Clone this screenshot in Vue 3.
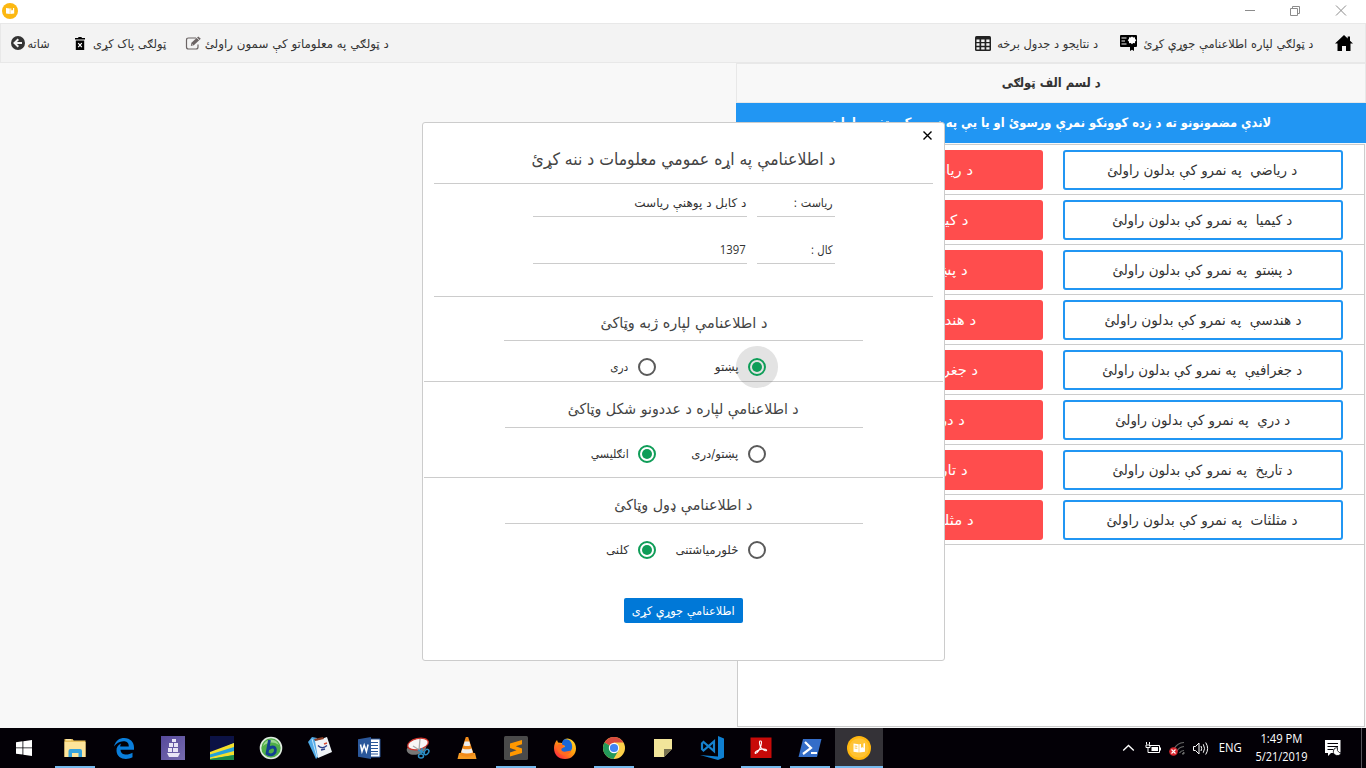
<script setup>
const subjects = [
  { name: 'ریاضي', w: 190, rw: 139 },
  { name: 'کیمیا', w: 180, rw: 130 },
  { name: 'پښتو', w: 180, rw: 130 },
  { name: 'هندسې', w: 197, rw: 146 },
  { name: 'جغرافیې', w: 200, rw: 149 },
  { name: 'دري', w: 175, rw: 124 },
  { name: 'تاریخ', w: 180, rw: 130 },
  { name: 'مثلثات', w: 191, rw: 141 },
]

const groups = [
  {
    cls: 'g1', title: 'د اطلاعنامې لپاره ژبه وټاکئ', w: 167,
    options: [{ label: 'پښتو', w: 24, on: true, halo: true }, { label: 'دری', w: 18 }],
  },
  {
    cls: 'g2', title: 'د اطلاعنامې لپاره د عددونو شکل وټاکئ', w: 231,
    options: [{ label: 'پښتو/دری', w: 47 }, { label: 'انګلیسي', w: 38, on: true }],
  },
  {
    cls: 'g3', title: 'د اطلاعنامې ډول وټاکئ', w: 138,
    options: [{ label: 'څلورمیاشتنی', w: 63 }, { label: 'کلنی', w: 23, on: true }],
  },
]

// Condenses a line of text horizontally so that it takes the given width.
const vFit = {
  mounted(el, { value }) {
    const natural = el.getBoundingClientRect().width
    if (!natural) return
    const margin = (value - natural) / 2
    el.style.marginLeft = margin + 'px'
    el.style.marginRight = margin + 'px'
    el.style.transform = `scaleX(${value / natural})`
  },
}
</script>

<template>
  <div class="screen">
    <header class="titlebar">
      <svg class="app-icon" width="16" height="16" viewBox="0 0 16 16">
        <circle cx="8" cy="8" r="8" fill="#fcb812" />
        <path d="M4 5l3.800.5v5.500L4 10.500zM8.300 5.500l1-.2v2.200l.9-.6.8.6V5h1.200v5.500l-3.900.5z" fill="#fff" />
      </svg>
      <svg class="win-controls" width="106" height="13" viewBox="0 0 106 13" fill="none" stroke="#8c8c8c">
        <path d="M0 7.500h10" />
        <path d="M45.500 5.500h7v7h-7zM47.500 5.500v-2h7v7h-2" />
        <path d="M91 2.500l10 10M101 2.500l-10 10" />
      </svg>
    </header>

    <nav class="toolbar">
      <div class="tool back">
        <svg width="14" height="14" viewBox="0 0 14 14">
          <circle cx="7" cy="7" r="7" fill="#333" />
          <path d="M11 7H4M7.300 3.200L3.500 7l3.800 3.800" stroke="#f3f3f3" stroke-width="2" fill="none" />
        </svg>
        <span v-fit="22" class="t" dir="rtl">شاته</span>
      </div>
      <div class="tool trash">
        <svg width="10" height="13" viewBox="0 0 10 13">
          <path d="M0 1h3l.6-1h2.800L7 1h3v1.500H0zM.8 3.500h8.400V13H.8z" fill="#000" />
          <path d="M3.200 6.200l3.600 4M6.800 6.200l-3.600 4" stroke="#fff" stroke-width="1.200" />
        </svg>
        <span v-fit="73" class="t" dir="rtl">ټولګی پاک کړی</span>
      </div>
      <div class="tool edit">
        <svg width="15" height="14" viewBox="0 0 15 14" fill="none" stroke="#6b6464">
          <path d="M10 2H2.500q-2 0-2 2v7q0 2 2 2h7.500q2 0 2-2V8.500" stroke-width="1.200" />
          <path d="M4.800 10l.6-3.300L12.300.5l2.500 2.300-7 6.400z" fill="#6b6464" stroke="none" />
          <path d="M5.900 9l1-.3M11 1.900l2.400 2.300" stroke="#f3f3f3" stroke-width=".8" />
        </svg>
        <span v-fit="184" class="t" dir="rtl">د ټولګي په معلوماتو کې سمون راولئ</span>
      </div>
      <div class="tool table">
        <svg width="16" height="15" viewBox="0 0 16 15">
          <rect width="16" height="15" rx="1.500" fill="#222" />
          <path d="M1.500 3.500h3v2.400h-3zM6.200 3.500h3.400v2.400H6.200zM11.300 3.500h3.200v2.400h-3.200zM1.500 7.300h3v2.500h-3zM6.200 7.300h3.400v2.500H6.200zM11.300 7.300h3.200v2.500h-3.200zM1.500 11.200h3v2.300h-3zM6.200 11.200h3.400v2.300H6.200zM11.300 11.200h3.200v2.300h-3.200z" fill="#f3f3f3" />
        </svg>
        <span v-fit="101" class="t" dir="rtl">د نتایجو د جدول برخه</span>
      </div>
      <div class="tool cert">
        <svg width="17" height="16" viewBox="0 0 17 16">
          <path d="M1 0h15q1 0 1 1v10q0 1-1 1h-2v4l-2-1.300-2 1.300v-4H1q-1 0-1-1V1q0-1 1-1z" fill="#000" />
          <path d="M1.500 3h5M1.500 6h3.500M1.500 9h5" stroke="#f3f3f3" stroke-width="1.200" />
          <path d="M12 1.400l1.200 1.100 1.700-.2.200 1.700 1.200 1.300-1.200 1.200-.2 1.700-1.700-.1L12 9.300l-1.300-1.200-1.600.1-.2-1.700-1.200-1.200L8.900 4l.2-1.700 1.600.2z" fill="#fff" />
        </svg>
        <span v-fit="170" class="t" dir="rtl">د ټولګي لپاره اطلاعنامې جوړې کړئ</span>
      </div>
      <svg class="home" width="18" height="16" viewBox="0 0 18 16">
        <path d="M9 0l3.700 3.500V1.500H15v4.200l3 2.900h-2.500V16H11v-5H7v5H2.500V8.600H0z" fill="#000" />
      </svg>
    </nav>

    <main class="content">
      <section class="panel">
        <h2 class="class-name"><span v-fit="99" class="t" dir="rtl">د لسم الف ټولګی</span></h2>
        <p class="hint"><span v-fit="441" class="t" dir="rtl">لاندې مضمونونو ته د زده کوونکو نمرې ورسوئ او یا یې په نمرو کې تغیر راولئ</span></p>
        <div class="list">
          <div v-for="s in subjects" :key="s.name" class="row">
            <div class="btn red"><span v-fit="s.rw" class="t" dir="rtl">د {{ s.name }} نمرې ورسوئ</span></div>
            <div class="btn outline"><span v-fit="s.w" class="t" dir="rtl">د {{ s.name }} &nbsp;په نمرو کې بدلون راولئ</span></div>
          </div>
        </div>
      </section>
    </main>

    <div class="modal">
      <svg class="close" width="9" height="9" viewBox="0 0 9 9">
        <path d="M.5.5l8 8M8.500.5l-8 8" stroke="#000" stroke-width="1.400" />
      </svg>
      <h1 class="modal-title"><span v-fit="304" class="t" dir="rtl">د اطلاعنامې په اړه عمومي معلومات د ننه کړئ</span></h1>
      <div class="fields">
        <div class="field">
          <div class="value"><span v-fit="112" class="t" dir="rtl">د کابل د پوهنې ریاست</span></div>
          <div class="label"><span v-fit="39" class="t" dir="rtl">ریاست :</span></div>
        </div>
        <div class="field">
          <div class="value num"><span v-fit="26" class="t">1397</span></div>
          <div class="label"><span v-fit="22" class="t" dir="rtl">کال :</span></div>
        </div>
      </div>
      <div v-for="g in groups" :key="g.cls" class="group" :class="g.cls">
        <h3><span v-fit="g.w" class="t" dir="rtl">{{ g.title }}</span></h3>
        <div class="options">
          <label v-for="o in g.options" :key="o.label" class="option">
            <span class="radio" :class="{ on: o.on, halo: o.halo }"></span>
            <span v-fit="o.w" class="t" dir="rtl">{{ o.label }}</span>
          </label>
        </div>
      </div>
      <button class="submit"><span v-fit="103" class="t" dir="rtl">اطلاعنامې جوړې کړی</span></button>
    </div>

    <footer class="taskbar">
      <div class="slot start">
        <svg width="16" height="16" viewBox="0 0 16 16" fill="#fff">
          <path d="M0 2.200L6.500 1.300v6.200H0zM7.300 1.200L16 0v7.500H7.300zM0 8.300h6.500v6.300L0 13.700zM7.300 8.300H16V16l-8.700-1.200z" />
        </svg>
      </div>
      <div class="slot open folder">
        <svg width="24" height="24" viewBox="0 0 24 24">
          <path d="M1.500 3h8l1.200 1.500H22.500V21h-21z" fill="#e9c15c" />
          <path d="M2 6h20.500v15H1.500V5z" fill="#fde49a" />
          <path d="M3 3.800h5" stroke="#fff3c8" />
          <path d="M5.500 21v-6q0-2 2-2h9.500q2 0 2 2v6h-3.500v-4H9v4z" fill="#36a3dc" />
        </svg>
      </div>
      <div class="slot">
        <svg width="24" height="24" viewBox="0 0 24 24">
          <path d="M2 10.500C3.500 4.500 7.500 2 12.300 2c6 0 9.700 4.300 9.700 9.500v2.300H8.500c.3 5.500 7 6 12 3v4.500c-7 3.500-15.500 1.300-16-6.300-.3-3.500 1.500-6 4.700-7.500-.8 1-1 2-1 3h8.600c0-4.500-3-5.300-5.500-5.200C7.500 5.400 4 7.500 2 10.500z" fill="#0a7edb" />
        </svg>
      </div>
      <div class="slot">
        <svg width="24" height="24" viewBox="0 0 24 24">
          <defs><linearGradient id="ship" x2="1" y2="1"><stop stop-color="#56499b" /><stop offset="1" stop-color="#776cae" /></linearGradient></defs>
          <path d="M0 0h24v24H0z" fill="url(#ship)" />
          <path d="M11 3h4v3h-4zM8 7h4v4H8zM13 7h4v4h-4zM7 12h4v4H7zM12 12h5v4h-5zM6 17h13l-2 4H8z" fill="#e8e5f5" />
        </svg>
      </div>
      <div class="slot">
        <svg width="24" height="24" viewBox="0 0 24 24">
          <path d="M0 0h24v24H0z" fill="#0c1245" />
          <path d="M0 17.500L24 7v17H0z" fill="#22a0dc" />
          <path d="M0 16L24 7v4L0 18.500z" fill="#f4df2a" />
          <path d="M0 21.500L24 15v4L0 23z" fill="#f4df2a" />
          <path d="M0 23l24-4v5H0z" fill="#1a8a48" />
        </svg>
      </div>
      <div class="slot">
        <svg width="24" height="24" viewBox="0 0 24 24">
          <circle cx="12" cy="12" r="10.500" fill="#4fae48" stroke="#dfeadf" stroke-width="1.600" />
          <path d="M4 10a8.500 8.500 0 0116-1c-6-4-11-3-16 1z" fill="#9bd790" />
          <path d="M10.500 4L8 17.500q3.500 2.500 6.500.5c3-2.500 2.500-7-1-7q-2 0-4 2" fill="none" stroke="#123f91" stroke-width="2.800" />
        </svg>
      </div>
      <div class="slot">
        <svg width="24" height="24" viewBox="0 0 24 24">
          <path d="M4 1l5 1 2 18-3 3L0 6z" fill="#4fa9e6" />
          <path d="M7 5l12-4 5 15-14 6z" fill="#eef2f6" />
          <path d="M6 3l9-2 1 2-9 2z" fill="#8c3f27" />
          <path d="M4 3l5 18" stroke="#c5e5fa" />
          <path d="M10 9.500q4 4.500 9 0" stroke="#2b3f8b" fill="none" stroke-width="1.300" />
          <path d="M13 14l4-1" stroke="#2b3f8b" stroke-width="1.300" />
          <path d="M16 8l3-1" stroke="#d5472e" stroke-width="1.500" />
        </svg>
      </div>
      <div class="slot">
        <svg width="24" height="24" viewBox="0 0 24 24">
          <path d="M12 3h11v18H12z" fill="#fff" stroke="#2b579a" />
          <path d="M14 6.500h7M14 9.500h7M14 12.500h7M14 15.500h7M14 18h7" stroke="#2b579a" />
          <path d="M1 3.300L14 1v22L1 20.700z" fill="#2b579a" />
          <path d="M3.500 8.500l1.500 7 2.200-6.500 2.200 6.500 1.700-7" fill="none" stroke="#fff" stroke-width="1.500" />
        </svg>
      </div>
      <div class="slot">
        <svg width="24" height="24" viewBox="0 0 24 24">
          <ellipse cx="10.500" cy="12.500" rx="10" ry="6" fill="#777" transform="rotate(-15 10.500 12.500)" />
          <ellipse cx="12" cy="8" rx="10.500" ry="5.500" fill="#f8f6f6" stroke="#cf342c" stroke-width="1.300" transform="rotate(-13 12 8)" />
          <path d="M14 3l-1 11M7 10l8 5" stroke="#aaa" stroke-width="1.300" />
          <path d="M12 14l7 3M16 12l-1 6" stroke="#2c8fc6" stroke-width="1.500" />
          <ellipse cx="20.500" cy="16" rx="2" ry="3" fill="none" stroke="#2c8fc6" stroke-width="1.500" transform="rotate(35 20.500 16)" />
          <ellipse cx="15" cy="20" rx="2.500" ry="2" fill="none" stroke="#2c8fc6" stroke-width="1.500" />
        </svg>
      </div>
      <div class="slot">
        <svg width="24" height="24" viewBox="0 0 24 24">
          <path d="M4 17h16l1.500 6h-19z" fill="#f59a23" />
          <path d="M10.800 1h2.400L19 19q-7 3.500-14 0z" fill="#f18a1a" />
          <path d="M9.700 5.500h4.600l1.200 4q-3.500 1.200-7 0zM7.400 12.500q4.600 1.700 9.200 0l1.300 4q-6 2.200-11.800 0z" fill="#eee" />
        </svg>
      </div>
      <div class="slot open">
        <svg width="24" height="24" viewBox="0 0 24 24">
          <rect width="24" height="24" rx="1.500" fill="#4a4a4a" />
          <path d="M18 4v4.200L11.700 10.300 18 12.500V17L6 20.500v-4l6.500-2.200L6 12V7.500z" fill="#ff9800" />
        </svg>
      </div>
      <div class="slot">
        <svg width="24" height="24" viewBox="0 0 24 24">
          <defs><linearGradient id="fox" x1="1" y2="1" x2=".1"><stop stop-color="#ffe52c" /><stop offset=".5" stop-color="#ff980e" /><stop offset="1" stop-color="#ff1746" /></linearGradient></defs>
          <path d="M12 3c4-2 11 2 11 9.500C23 18 19 23 12 23S1 18.500 1 12c0-3 1-6 3-8l1 2.500 4 .5z" fill="url(#fox)" />
          <path d="M11 3.500c6-1.500 9 4 8 9-1 4-5 5.500-8 4.500-4-.5-5-4-3-5l4-1c0-2-2-2-3-2 0-2 0-4 2-5.500z" fill="#1767d8" />
          <path d="M4 11c1-4 3-4 7-1.500l-1 2.500c-2 0-2 2-1 3 3 2 7-1 9 0-1 4-8 5-11 2.500C5 16 4 13 4 11z" fill="#ff6b21" />
        </svg>
      </div>
      <div class="slot open">
        <svg width="24" height="24" viewBox="0 0 24 24">
          <circle cx="12" cy="12" r="11" fill="#fdd04a" />
          <path d="M12 12L2.500 6.500A11 11 0 0121.500 6.500H12z" fill="#d94b3f" />
          <path d="M2.500 6.500A11 11 0 0011.500 23l5-8.500L12 12z" fill="#23995a" />
          <circle cx="12" cy="12" r="5.200" fill="#fff" /><circle cx="12" cy="12" r="4.100" fill="#4285f4" />
        </svg>
      </div>
      <div class="slot">
        <svg width="24" height="24" viewBox="0 0 24 24">
          <path d="M3 3h18v10l-8 8H3z" fill="#f2e59a" /><path d="M21 13l-8 8v-8z" fill="#77714f" />
        </svg>
      </div>
      <div class="slot">
        <svg width="24" height="24" viewBox="0 0 24 24">
          <path d="M18 0l6 2.500v19L18 24 0 19l18 1.500z" fill="#0f7fd0" />
          <path d="M14 5.500v9.500L3.500 6 2 7.500v5.500L3.500 14.500z" fill="none" stroke="#1681cc" stroke-width="2.200" />
        </svg>
      </div>
      <div class="slot open">
        <svg width="24" height="24" viewBox="0 0 24 24">
          <rect x="1.500" y="1.500" width="21" height="20.500" fill="#c80a08" />
          <path d="M11 5c2-.5 1.500 2.500 1 4.500-1 3.500-3.500 8-5.500 8-1.500-1 2-3.500 6-4.200 3-.5 5.500.2 5 1.200-1 1-5-1.300-6.200-4C10.500 8 10 5.500 11 5z" fill="none" stroke="#fff" stroke-width="1.100" />
        </svg>
      </div>
      <div class="slot open">
        <svg width="24" height="24" viewBox="0 0 24 24">
          <path d="M5 3h18.500l-4.500 18H.5z" fill="#346dc8" />
          <path d="M7 6l6 6-8 6M13 17h6" fill="none" stroke="#fff" stroke-width="2.200" />
        </svg>
      </div>
      <div class="slot open active">
        <svg width="24" height="24" viewBox="0 0 24 24">
          <circle cx="12" cy="12" r="12" fill="#ffb70f" /><circle cx="12" cy="12" r="9.800" fill="#ffc334" />
          <path d="M6.500 7.500l5.200.8v8.200l-5.200-.8zM12.300 8.300l1.700-.3v4l1.200-1 1.200 1V7.500l1.600-.2v8.400l-5.700.8z" fill="#fff" />
          <path d="M7.700 10l2.600.3M7.700 12l2.600.3" stroke="#ffb70f" stroke-width=".8" />
        </svg>
      </div>

      <div class="tray">
        <svg width="88" height="18" viewBox="0 0 88 18" fill="none" stroke="#fff" class="tray-icons">
          <path d="M1.200 11.500l5.300-5 5.300 5" stroke-width="1.300" />
          <path d="M27 6.500h10.500v7H27M38.500 8.500v3" /><path d="M29.500 8h6.500v4h-6.500z" fill="#fff" stroke="none" />
          <path d="M24.500 3v2.500M27.500 3v2.500M24 6h4v2.500h-4zM26 9v4.500h1.500" />
          <g stroke="#696969" transform="translate(3 0)"><path d="M49 10q3-6 10-6.500M52 12q2-4 7-4.500M54.500 14q1.500-2.500 4.500-2.500" stroke-width="1.200" /><path d="M57 15l2-2v2z" fill="#777" /></g>
          <circle cx="51.500" cy="12.500" r="4.300" fill="#d9262e" stroke="none" /><path d="M49.500 10.500l4 4M53.500 10.500l-4 4" stroke-width="1.100" />
          <path d="M71.500 7.500h2l3.500-3.500v11l-3.500-3.500h-2z" /><path d="M79 7q1.400 2.500 0 5M81.300 5.300q2.500 4.200 0 8.400M83.700 3.500q3.800 6 0 12" />
        </svg>
        <span v-fit="23" class="t lang">ENG</span>
        <div class="clock"><span v-fit="42" class="t">1:49 PM</span><span v-fit="52" class="t">5/21/2019</span></div>
        <svg class="notes" width="17" height="17" viewBox="0 0 17 17">
          <path d="M0 0h15.500v13H6l-3 3v-3H0z" fill="#fff" />
          <path d="M2.500 3.500h10.500M2.500 6.500h10.500M2.500 9.500h6" stroke="#030006" />
          <path d="M12.500 7.500q-1 3.500 1.700 5 1 .5 2 0a4 4 0 11-3.700-5z" fill="#fff" stroke="#030006" stroke-width=".8" />
        </svg>
      </div>
      <div class="show-desktop"></div>
    </footer>
  </div>
</template>

<style>
html, body { margin: 0; overflow: hidden; }
</style>

<style scoped>
* { box-sizing: border-box; }
.screen {
  width: 1366px; height: 768px; display: flex; flex-direction: column; position: relative; overflow: hidden;
  background: #f8f8f8; color: #333; font: 12px/20px "DejaVu Sans Condensed", "DejaVu Sans", sans-serif;
}
svg { display: block; flex: none; overflow: visible; }
.t { display: inline-block; white-space: nowrap; flex: none; }
h1, h2, h3, p { margin: 0; font-weight: normal; }

.titlebar { height: 23px; flex: none; background: #fff; display: flex; justify-content: space-between; padding: 3px 15px 0 2px; }

.toolbar { height: 40px; flex: none; display: flex; align-items: center; background: #f3f3f3; border: 1px solid #e8e8e8; padding-left: 10px; }
.tool { display: flex; align-items: center; gap: 4px; }
.tool .t { position: relative; top: 1px; }
.back { gap: 3px; }
.trash { margin-left: 25px; gap: 8px; }
.edit { margin-left: 20px; }
.table { margin-left: 586px; gap: 6px; }
.cert { margin-left: 22px; gap: 6px; }
.home { margin-left: 22px; }

.content { flex: 1; min-height: 0; display: flex; justify-content: flex-end; }
.panel { width: 630px; display: flex; flex-direction: column; }
.class-name { height: 40px; flex: none; display: flex; align-items: center; justify-content: center; background: #f8f8f8; border: 1px solid #e8e8e8; font-size: 13px; font-weight: bold; }
.hint { height: 40px; flex: none; display: flex; align-items: center; justify-content: center; background: #2196f3; color: #fff; font-size: 13px; font-weight: bold; }
.list { height: 583px; margin: 1px 1px 0; flex: none; background: #fff; border: 1px solid #ccc; }
.row { height: 50px; display: flex; gap: 20px; padding: 5px 0 4px 25px; border-bottom: 1px solid #ccc; }
.btn { width: 280px; height: 40px; border-radius: 3px; display: flex; align-items: center; justify-content: center; font-size: 14px; }
.red { background: #ff4d4d; color: #fff; }
.outline { border: 2px solid #2196f3; background: #fff; padding-right: 1px; }

.modal { position: absolute; left: 422px; top: 122px; width: 523px; height: 539px; background: #fff; border: 1px solid #ccc; border-radius: 3px; display: flex; flex-direction: column; align-items: center; }
.close { position: absolute; right: 12px; top: 8px; }
.modal-title { width: 499px; height: 61px; padding-top: 26px; border-bottom: 1px solid #ccc; text-align: center; font-size: 17px; color: #444; }
.fields { width: 499px; height: 113px; padding: 10px 98px 0 99px; border-bottom: 1px solid #ccc; display: flex; flex-direction: column; gap: 24px; }
.field { display: flex; gap: 10px; height: 23px; line-height: 19px; }
.value { width: 214px; border-bottom: 1px solid #ccc; text-align: right; padding-right: 1px; }
.label { width: 78px; border-bottom: 1px solid #ccc; text-align: right; padding-right: 2px; }
.num { font-family: "Open Sans", sans-serif; line-height: 18px; }
.group { width: 519px; border-bottom: 1px solid #ccc; display: flex; flex-direction: column; align-items: center; }
.group h3 { width: 358px; border-bottom: 1px solid #ccc; text-align: center; font-size: 15px; color: #444; }
.g1 { height: 85px; }
.g1 h3 { width: 359px; height: 44px; padding-top: 16px; }
.g2 { height: 96px; }
.g2 h3 { height: 46px; padding-top: 17px; }
.g3 { height: 82px; border: 0; }
.g3 h3 { height: 46px; padding-top: 17px; }
.options { display: flex; flex-direction: row-reverse; height: 20px; margin-top: 16px; width: 166px; padding-right: 1px; }
.option { width: 110px; flex: none; display: flex; flex-direction: row-reverse; justify-content: flex-start; align-items: center; gap: 9px; }
.radio { width: 18px; height: 18px; flex: none; border-radius: 50%; border: 2px solid #5a5a5a; display: flex; align-items: center; justify-content: center; }
.radio.on { border-color: #0f9d58; }
.radio.on::after { content: ""; width: 10px; height: 10px; border-radius: 50%; background: #0f9d58; }
.radio.halo { box-shadow: 0 0 0 12px rgba(90, 90, 90, .17); background: rgba(90, 90, 90, .17); }
.submit { margin-top: 38px; width: 119px; height: 25px; border: 0; padding: 0; border-radius: 2px; background: #0078d7; color: #fff; font: inherit; display: flex; align-items: center; justify-content: center; }

.taskbar { height: 40px; flex: none; background: #030006; color: #fff; display: flex; font-family: "Open Sans", sans-serif; }
.slot { width: 48px; margin-left: 1px; flex: none; display: flex; align-items: center; justify-content: center; }
.start { margin: 0 2px 0 0; }
.open { background: linear-gradient(#76b9ed, #76b9ed) center bottom / 40px 2px no-repeat; }
.active { background: linear-gradient(#76b9ed, #76b9ed) center bottom / 48px 2px no-repeat, #343237; }
.tray { margin-left: auto; display: flex; align-items: center; }
.lang { margin-left: 10px; }
.tray-icons { margin-right: 9px; }
.clock { width: 72px; display: flex; flex-direction: column; align-items: center; line-height: 18px; margin-left: 3px; }
.notes { margin-left: 8px; }
.show-desktop { width: 1px; background: #55535a; margin: 0 4px 0 19px; }
</style>
